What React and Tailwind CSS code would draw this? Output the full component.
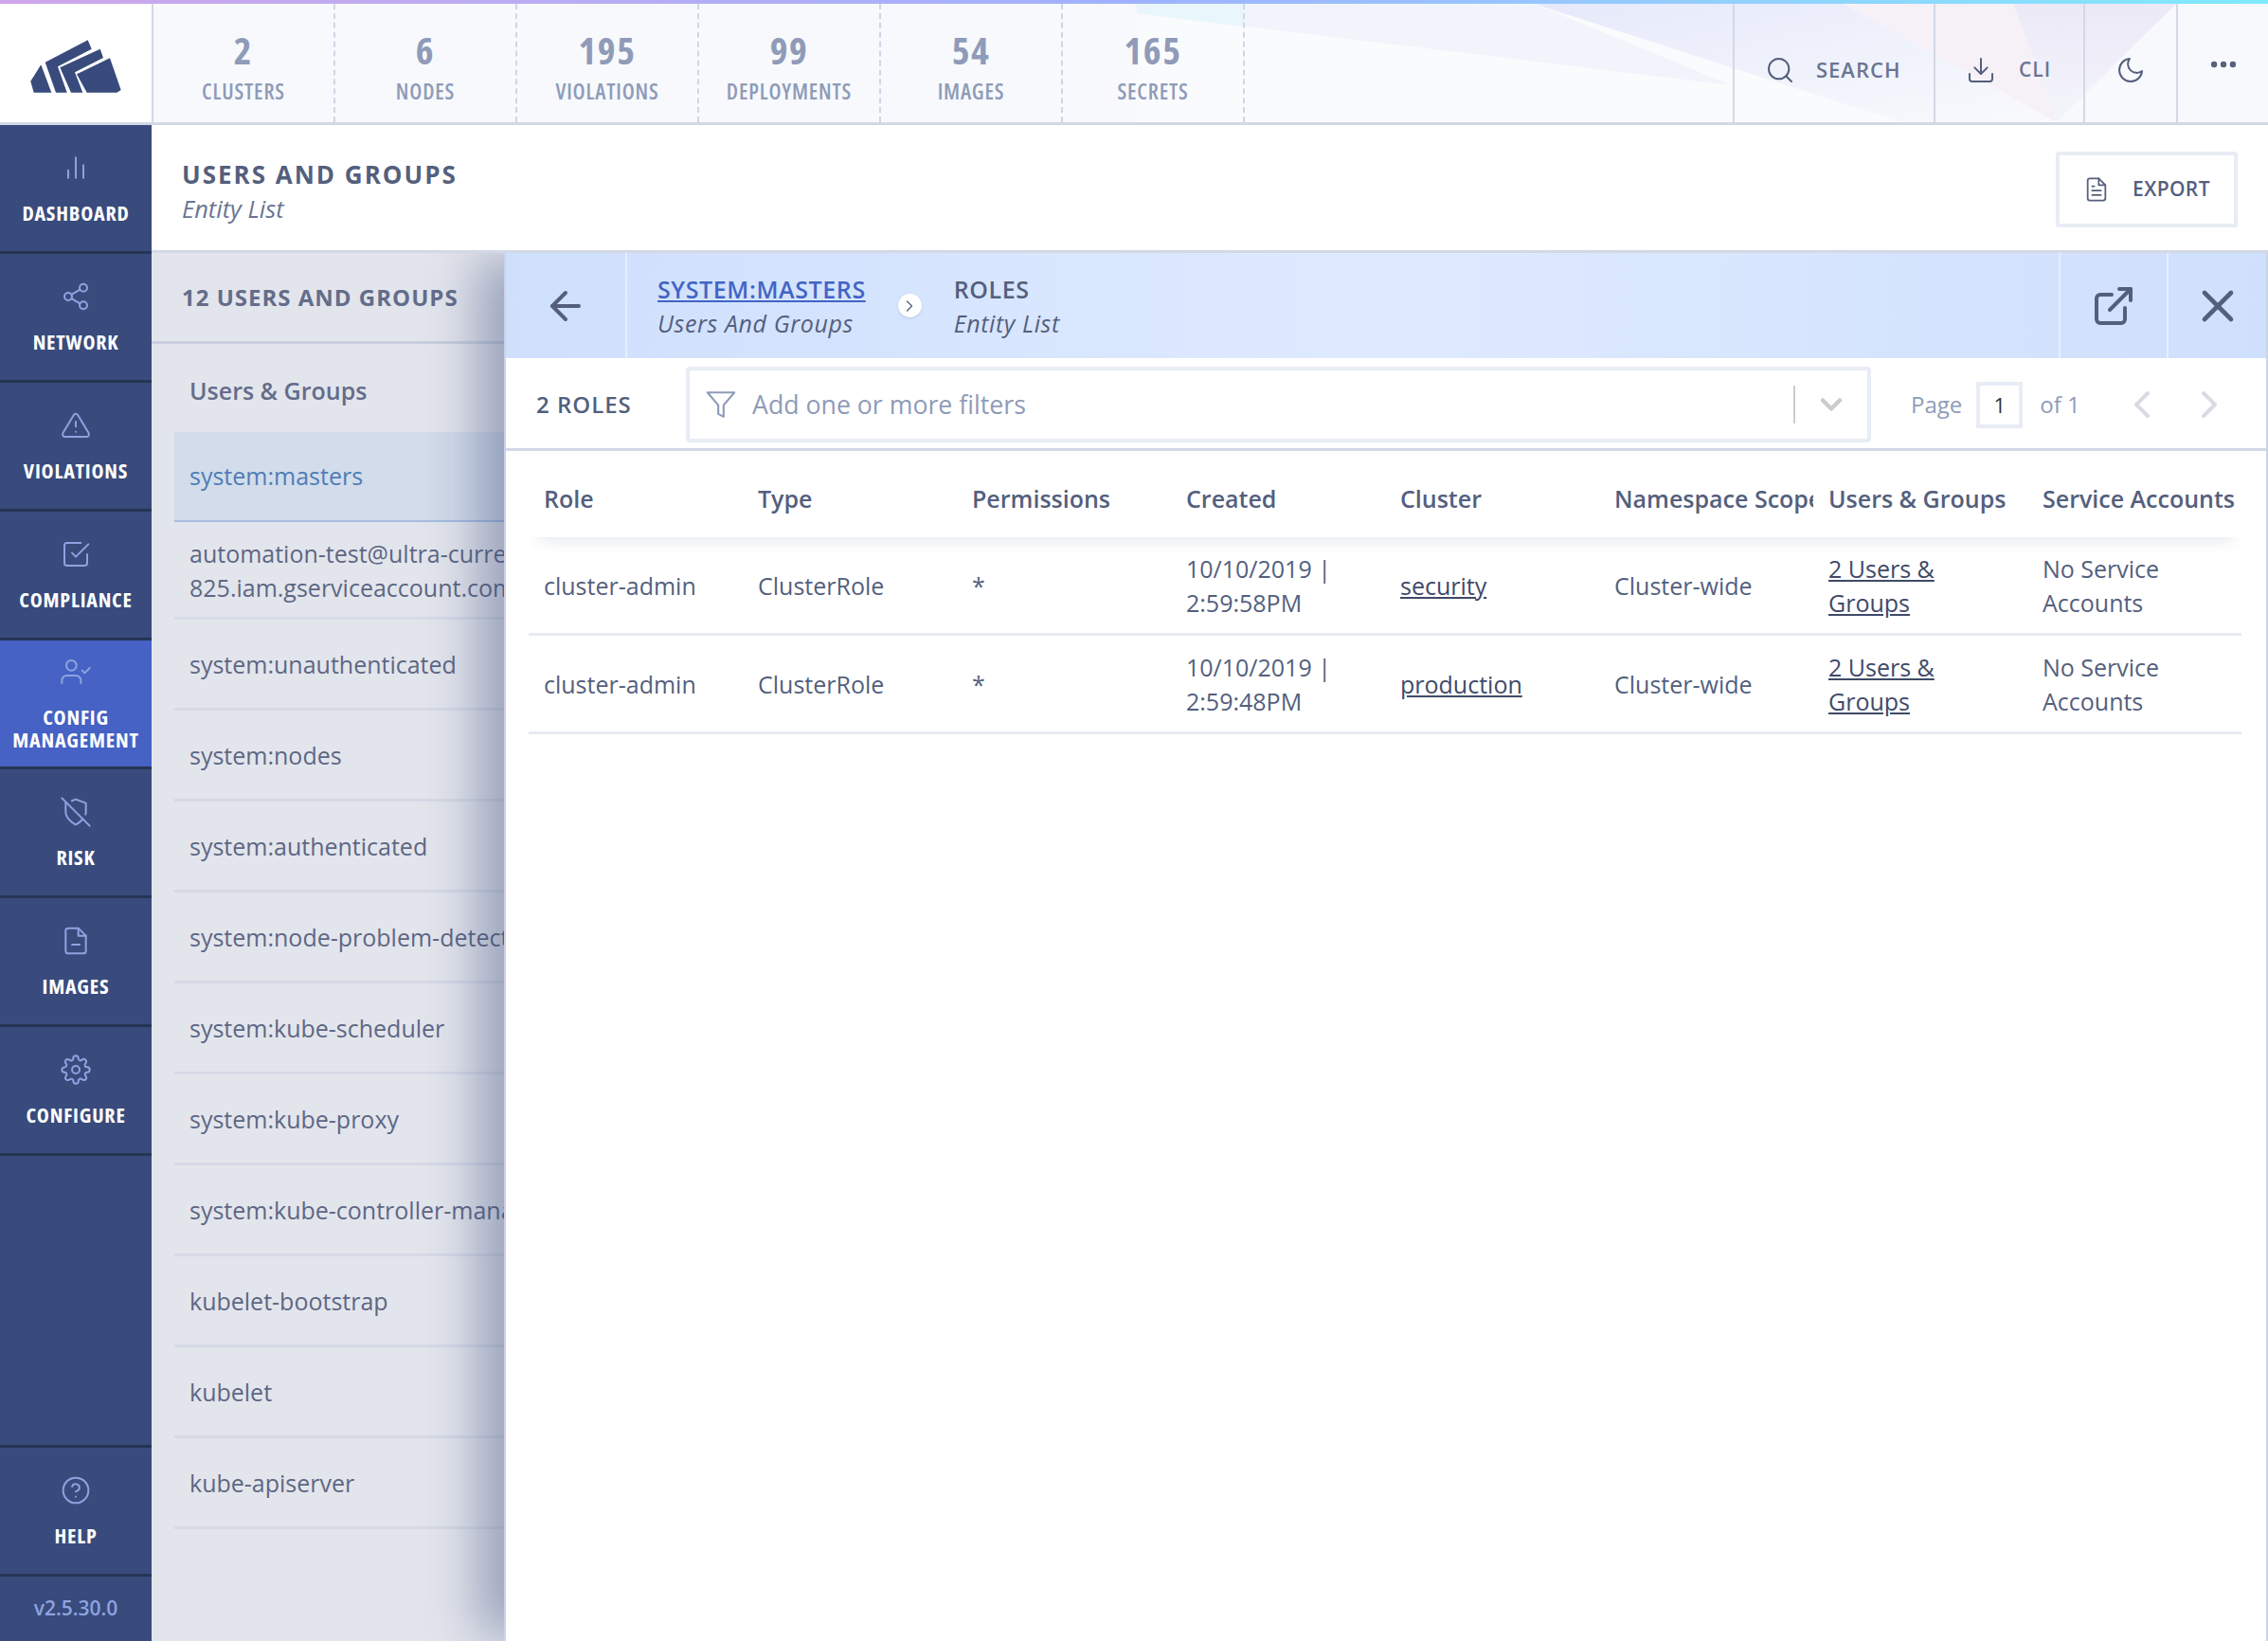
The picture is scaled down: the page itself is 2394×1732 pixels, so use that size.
import {
  FiBarChart2, FiShare2, FiAlertTriangle, FiCheckSquare, FiUserCheck, FiShieldOff, FiFileMinus, FiSettings, FiHelpCircle,
  FiSearch, FiDownload, FiMoon, FiMoreHorizontal, FiFileText, FiArrowLeft, FiExternalLink, FiX, FiFilter,
  FiChevronRight, FiChevronLeft, FiChevronDown,
} from "react-icons/fi";

const tiles = [
  ["2", "CLUSTERS"],
  ["6", "NODES"],
  ["195", "VIOLATIONS"],
  ["99", "DEPLOYMENTS"],
  ["54", "IMAGES"],
  ["165", "SECRETS"],
];

const navItems = [
  { label: "DASHBOARD", icon: FiBarChart2 },
  { label: "NETWORK", icon: FiShare2 },
  { label: "VIOLATIONS", icon: FiAlertTriangle },
  { label: "COMPLIANCE", icon: FiCheckSquare },
  { label: "CONFIG MANAGEMENT", icon: FiUserCheck, active: true },
  { label: "RISK", icon: FiShieldOff },
  { label: "IMAGES", icon: FiFileMinus },
  { label: "CONFIGURE", icon: FiSettings },
];

const listRows = [
  "system:unauthenticated",
  "system:nodes",
  "system:authenticated",
  "system:node-problem-detector",
  "system:kube-scheduler",
  "system:kube-proxy",
  "system:kube-controller-manager",
  "kubelet-bootstrap",
  "kubelet",
  "kube-apiserver",
];

const columns = ["Role", "Type", "Permissions", "Created", "Cluster", "Namespace Scope", "Users & Groups", "Service Accounts"];

const roles = [
  { created: "10/10/2019 | 2:59:58PM", cluster: "security" },
  { created: "10/10/2019 | 2:59:48PM", cluster: "production" },
];

const condensed = "font-['Open_Sans',sans-serif] [font-stretch:75%]";

function NavItem({ label, icon: Icon, active }) {
  return (
    <div className={`h-[136px] shrink-0 border-b-[3px] border-[#263454] flex flex-col items-center justify-center ${active ? "bg-[#4562c4]" : ""}`}>
      <Icon className="text-[#8ea3e0] shrink-0" size={32} strokeWidth={1.5} />
      <div className={`${condensed} mt-[19px] text-white text-[22px] leading-[24px] font-bold tracking-[0.8px] text-center`}>{label}</div>
    </div>
  );
}

function Logo() {
  return (
    <svg viewBox="0 0 160 128" className="w-[160px] h-[128px]" fill="#384b7c">
      <polygon points="32.3,81.7 43.3,64.3 54.3,93.7 35.7,93.7" />
      <polygon points="47.7,61.7 92.7,38.3 96.7,47.7 61,66.3 70.7,93.7 59,93.7" />
      <polygon points="63.3,67.3 105.7,47.7 109,57 79,72.3 87.3,93.7 75,93.7" />
      <polygon points="81,74.3 116,57.3 127.7,91 123.3,93.7 91.7,93.7" />
    </svg>
  );
}

function HeaderArt() {
  return (
    <svg className="absolute top-[4px] left-[1200px] w-[1194px] h-[125px]" viewBox="0 0 1194 125" preserveAspectRatio="none">
      <defs>
        <linearGradient id="wedgeA" x1="0" y1="0" x2="1" y2="1">
          <stop offset="0" stopColor="#e6e9fa" />
          <stop offset="1" stopColor="#f9fafd" />
        </linearGradient>
        <linearGradient id="wedgeC" x1="0" y1="0" x2="0" y2="1">
          <stop offset="0" stopColor="#ece9f7" />
          <stop offset="1" stopColor="#f4f5fb" />
        </linearGradient>
      </defs>
      <rect x="0" y="0" width="1194" height="125" fill="#fafbfd" />
      <polygon points="0,10 0,0 419,0 628,86" fill="#f1f5fb" />
      <polygon points="0,0 113,0 113,24 0,10" fill="#e9f6fc" />
      <polygon points="419,0 746,0 971,125 807,125" fill="url(#wedgeA)" />
      <polygon points="746,0 925,0 971,125" fill="#f6f1f7" />
      <polygon points="925,0 1097,0 971,125" fill="url(#wedgeC)" />
      <polygon points="1097,0 1194,0 1194,125 971,125" fill="#f8f9fc" />
    </svg>
  );
}

function Header() {
  return (
    <div className="relative h-[132px] shrink-0 flex bg-[#f7f9fc] border-b-[3px] border-[#d3d8e6] pt-[4px]">
      <div className="absolute top-0 left-0 right-0 h-[4px] bg-gradient-to-r from-[#cfa6ea] via-[#9fb2fd] to-[#7feafc]" />
      <HeaderArt />
      <div className="relative w-[160px] shrink-0 bg-white"><Logo /></div>
      <div className="relative flex border-l-[2px] border-[#d3d8e6]">
        {tiles.map(([n, label]) => (
          <div key={label} className="w-[192px] flex flex-col items-center border-r-[2px] border-dashed border-[#cfd6e6]">
            <div className="font-['Open_Sans',sans-serif] [font-stretch:85%] mt-[26px] text-[40px] leading-[46px] font-bold tracking-[1.5px] text-[#8f9bb8]">{n}</div>
            <div className={`${condensed} mt-[7px] text-[23px] leading-[26px] font-semibold tracking-[0.8px] text-[#8f9bb8]`}>{label}</div>
          </div>
        ))}
      </div>
      <div className="relative ml-auto flex text-[#545f7d]">
        <div className="w-[212px] flex items-center border-l-[2px] border-[#d3d8e6] pl-[32px] pt-[14px]">
          <FiSearch size={32} strokeWidth={1.5} />
          <span className="ml-[22px] font-['Open_Sans',sans-serif] text-[22px] tracking-[1px] text-[#6a7592] font-semibold">SEARCH</span>
        </div>
        <div className="w-[158px] flex items-center border-l-[2px] border-[#d3d8e6] pl-[32px] pt-[14px]">
          <FiDownload size={32} strokeWidth={1.5} />
          <span className="ml-[24px] font-['Open_Sans',sans-serif] text-[21px] tracking-[1px] text-[#6a7592] font-semibold">CLI</span>
        </div>
        <div className="w-[98px] flex items-center justify-center border-l-[2px] border-[#d3d8e6] pt-[14px]">
          <FiMoon size={32} strokeWidth={1.5} />
        </div>
        <div className="w-[97px] flex justify-center pt-[47px] border-l-[2px] border-[#d3d8e6]">
          <FiMoreHorizontal size={34} strokeWidth={2.5} />
        </div>
      </div>
    </div>
  );
}

function Sidebar() {
  return (
    <div className="w-[160px] shrink-0 bg-[#384b7c] flex flex-col">
      {navItems.map((item) => (
        <NavItem key={item.label} {...item} />
      ))}
      <div className="mt-auto border-t-[3px] border-[#263454]">
        <NavItem label="HELP" icon={FiHelpCircle} />
      </div>
      <div className="h-[68px] flex items-center justify-center text-[21px] font-semibold text-[#8ea3e0]">v2.5.30.0</div>
    </div>
  );
}

function EntityList() {
  return (
    <div className="w-[372px] shrink-0 bg-[#e3e5ec] overflow-hidden flex flex-col text-[#5d6784]">
      <div className="h-[96px] shrink-0 pl-[32px] flex items-center border-b-[3px] border-[#c9cfe0]">
        <span className="w-max whitespace-nowrap text-[24px] font-bold tracking-[1px] text-[#636d8a]">12 USERS AND GROUPS</span>
      </div>
      <div className="pl-[24px] flex flex-col text-[25px]">
        <div className="h-[93px] shrink-0 pl-[16px] pt-[6px] flex items-center font-semibold text-[#636d8a]">Users &amp; Groups</div>
        <div className="h-[95px] shrink-0 pl-[16px] flex items-center bg-[#d2dcea] border-b-[2px] border-[#a4bde0] text-[#4f7cb6]">system:masters</div>
        <div className="h-[103px] shrink-0 pl-[16px] pt-[2px] flex flex-col justify-center leading-[36px] border-b-[3px] border-[#d6dae6] whitespace-nowrap">
          <span>automation-test@ultra-current-</span>
          <span>825.iam.gserviceaccount.com</span>
        </div>
        {listRows.map((r) => (
          <div key={r} className="h-[96px] shrink-0 pl-[16px] pt-[3px] flex items-center border-b-[3px] border-[#d6dae6] whitespace-nowrap">{r}</div>
        ))}
      </div>
    </div>
  );
}

function Crumb({ title, sub, link }) {
  return (
    <div className="flex flex-col text-[25px] leading-[36px] tracking-[0.6px]">
      <span className={`font-semibold ${link ? "text-[#4264c5] underline" : "text-[#545f7d]"}`}>{title}</span>
      <span className="italic text-[#545f7d]">{sub}</span>
    </div>
  );
}

function Panel() {
  return (
    <div className="relative flex-1 min-w-0 bg-white border-l-[2px] border-r-[2px] border-[#ccd3e6] shadow-[-34px_0_50px_-6px_rgba(56,75,124,0.42)] flex flex-col text-[#545f7d]">
      <div className="h-[111px] shrink-0 flex bg-gradient-to-r from-[#cfe0fd] via-[#deeaff] to-[#cfe0fd]">
        <div className="w-[128px] flex items-center justify-center border-r-[2px] border-[#e6efff]">
          <FiArrowLeft size={48} strokeWidth={2} />
        </div>
        <div className="flex items-center pl-[32px]">
          <Crumb title="SYSTEM:MASTERS" sub="Users And Groups" link />
          <div className="mx-[34px] w-[25px] h-[25px] rounded-full bg-white shadow flex items-center justify-center">
            <FiChevronRight size={20} strokeWidth={1.5} />
          </div>
          <Crumb title="ROLES" sub="Entity List" />
        </div>
        <div className="ml-auto w-[114px] flex items-center justify-center border-l-[2px] border-[#e6efff]">
          <FiExternalLink size={48} strokeWidth={2} />
        </div>
        <div className="w-[105px] flex items-center justify-center border-l-[2px] border-[#e6efff]">
          <FiX size={56} strokeWidth={2} />
        </div>
      </div>
      <div className="h-[98px] shrink-0 pt-[3px] flex items-center border-b-[3px] border-[#d3d8e6]">
        <span className="w-[190px] pl-[32px] text-[24px] font-semibold tracking-[1px]">2 ROLES</span>
        <div className="w-[1251px] h-[80px] rounded-[4px] border-[4px] border-[#e8ecf5] flex items-center">
          <FiFilter className="ml-[16px] text-[#8f9bb8]" size={34} strokeWidth={1.5} />
          <span className="ml-[16px] text-[26.7px] text-[#8f9bb8]">Add one or more filters</span>
          <div className="ml-auto w-[2px] h-[40px] bg-[#ccc]" />
          <FiChevronDown className="mx-[20px] text-[#ccc]" size={36} strokeWidth={3} />
        </div>
        <span className="ml-[42px] text-[24px] text-[#8f9bb8]">Page</span>
        <div className="ml-[15px] w-[49px] h-[49px] border-[4px] border-[#e8ecf5] flex items-center justify-center text-[22px] text-[#333]">1</div>
        <span className="ml-[18px] text-[24px] text-[#8f9bb8]">of 1</span>
        <FiChevronLeft className="ml-[41px] text-[#d8dbe3]" size={48} strokeWidth={2} />
        <FiChevronRight className="ml-[23px] text-[#d8dbe3]" size={48} strokeWidth={2} />
      </div>
      <div className="w-[1808px] ml-[24px] text-[25px] leading-[36px]">
        <div className="grid grid-cols-8 h-[91px] pt-[9px] items-center font-semibold shadow-[0_14px_14px_-10px_rgba(56,75,124,0.12)]">
          {columns.map((c) => (
            <div key={c} className="px-[16px] overflow-hidden whitespace-nowrap">{c}</div>
          ))}
        </div>
        {roles.map((r) => (
          <div key={r.cluster} className="grid grid-cols-8 h-[104px] items-center border-b-[3px] border-[#e8ebf3]">
            <div className="px-[16px]">cluster-admin</div>
            <div className="px-[16px]">ClusterRole</div>
            <div className="px-[16px]">*</div>
            <div className="px-[16px]">{r.created}</div>
            <div className="px-[16px] underline font-medium text-[#3f4a67]">{r.cluster}</div>
            <div className="px-[16px]">Cluster-wide</div>
            <div className="px-[16px] underline font-medium text-[#3f4a67]">2 Users &amp; Groups</div>
            <div className="px-[16px]">No Service Accounts</div>
          </div>
        ))}
      </div>
    </div>
  );
}

export default function App() {
  return (
    <div className="h-[1732px] w-[2394px] overflow-hidden flex flex-col bg-white font-['Open_Sans',sans-serif]">
      <Header />
      <div className="flex-1 min-h-0 flex">
        <Sidebar />
        <div className="flex-1 min-w-0 flex flex-col">
          <div className="h-[135px] shrink-0 pl-[32px] pr-[32px] flex items-center justify-between border-b-[3px] border-[#d3d8e6]">
            <div className="pt-[8px]">
              <div className="text-[26px] leading-[36px] font-bold tracking-[2px] text-[#545f7d]">USERS AND GROUPS</div>
              <div className="text-[25.5px] leading-[36px] italic text-[#6a7592]">Entity List</div>
            </div>
            <div className="mt-[4px] w-[192px] h-[80px] border-[4px] border-[#e8ecf5] rounded-[3px] flex items-center justify-center text-[#545f7d]">
              <FiFileText size={28} strokeWidth={1.5} />
              <span className="ml-[24px] text-[21px] font-semibold tracking-[0.4px]">EXPORT</span>
            </div>
          </div>
          <div className="flex-1 min-h-0 flex overflow-hidden">
            <EntityList />
            <Panel />
          </div>
        </div>
      </div>
    </div>
  );
}
